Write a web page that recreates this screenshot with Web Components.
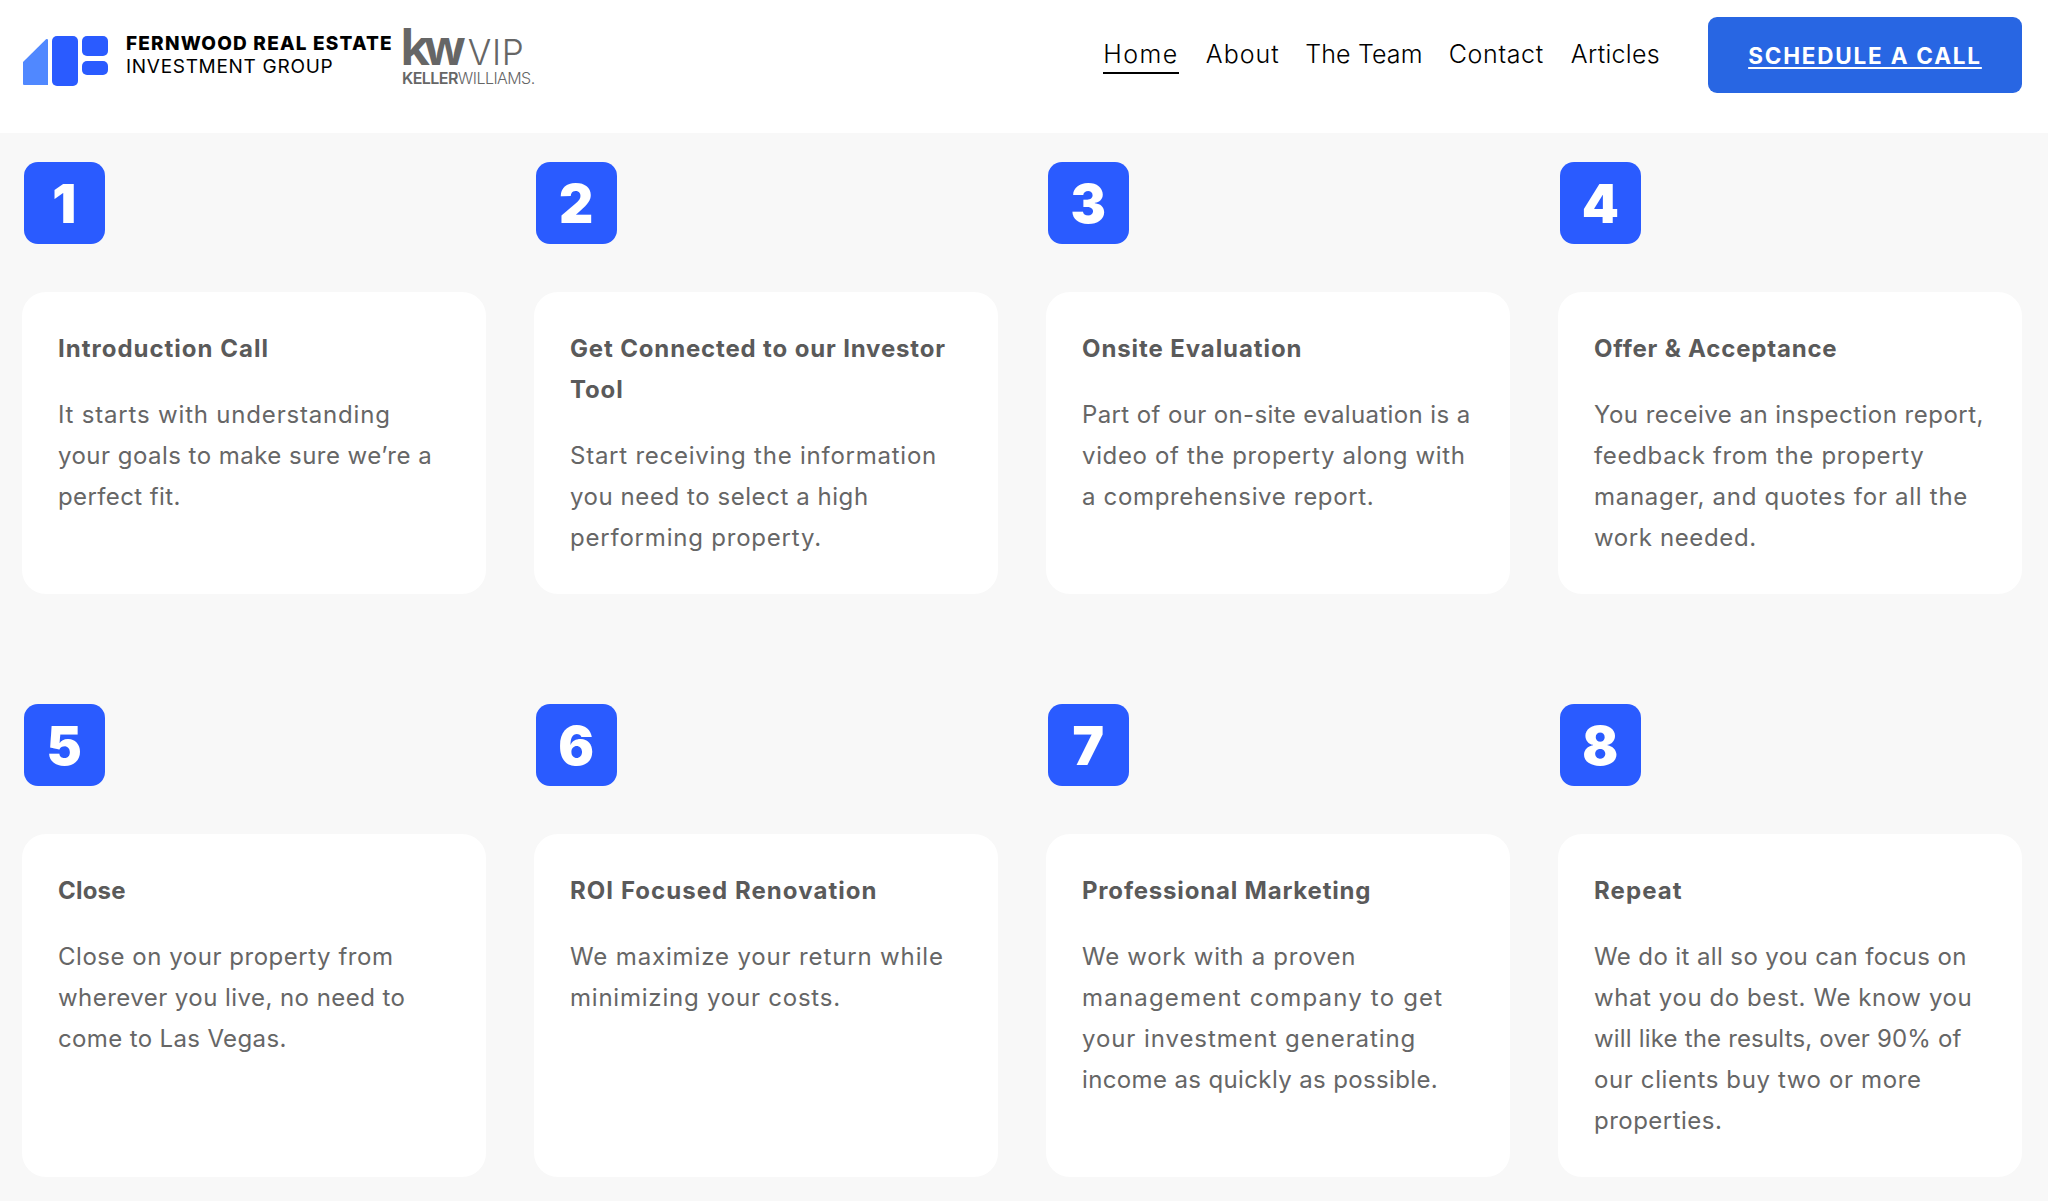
<!DOCTYPE html>
<html lang="en"><head><meta charset="utf-8"><title>Fernwood</title>
<style>
html,body{margin:0;background:#f8f8f8;font-family:Inter,"Open Sans",sans-serif}
step-item span{white-space:nowrap}
</style></head><body>
<site-header>
  <site-logo slot="logo"></site-logo>
  <nav-link active style="letter-spacing:1.45px">Home</nav-link>
  <nav-link style="letter-spacing:1px;margin-right:-1.5px">About</nav-link>
  <nav-link style="letter-spacing:.14px;margin-right:-1px">The Team</nav-link>
  <nav-link style="letter-spacing:.66px">Contact</nav-link>
  <nav-link style="letter-spacing:.31px">Articles</nav-link>
  <cta-button slot="cta">SCHEDULE A CALL</cta-button>
</site-header>
<step-grid>
  <step-item n="1" heading="Introduction Call" hls="1"><span style="letter-spacing:.81px">It starts with understanding</span><br><span style="letter-spacing:.47px">your goals to make sure we’re a</span><br><span style="letter-spacing:.39px">perfect fit.</span></step-item>
  <step-item n="2" heading="Get Connected to our Investor&#10;Tool" hls=".85"><span style="letter-spacing:.76px">Start receiving the information</span><br><span style="letter-spacing:.56px">you need to select a high</span><br><span style="letter-spacing:.79px">performing property.</span></step-item>
  <step-item n="3" heading="Onsite Evaluation" hls=".91"><span style="letter-spacing:.38px">Part of our on-site evaluation is a</span><br><span style="letter-spacing:.64px">video of the property along with</span><br><span style="letter-spacing:.66px">a comprehensive report.</span></step-item>
  <step-item n="4" heading="Offer &amp; Acceptance" hls=".81"><span style="letter-spacing:.48px">You receive an inspection report,</span><br><span style="letter-spacing:.67px">feedback from the property</span><br><span style="letter-spacing:.72px">manager, and quotes for all the</span><br><span style="letter-spacing:.61px">work needed.</span></step-item>
  <step-item n="5" heading="Close" hls=".2"><span style="letter-spacing:.53px">Close on your property from</span><br><span style="letter-spacing:.45px">wherever you live, no need to</span><br><span style="letter-spacing:.36px">come to Las Vegas.</span></step-item>
  <step-item n="6" heading="ROI Focused Renovation" hls="1.05"><span style="letter-spacing:.86px">We maximize your return while</span><br><span style="letter-spacing:.78px">minimizing your costs.</span></step-item>
  <step-item n="7" heading="Professional Marketing" hls=".81"><span style="letter-spacing:.72px">We work with a proven</span><br><span style="letter-spacing:1.19px">management company to get</span><br><span style="letter-spacing:.92px">your investment generating</span><br><span style="letter-spacing:.37px">income as quickly as possible.</span></step-item>
  <step-item n="8" heading="Repeat" hls="1.1"><span style="letter-spacing:.39px">We do it all so you can focus on</span><br><span style="letter-spacing:.58px">what you do best. We know you</span><br><span style="letter-spacing:.18px">will like the results, over 90% of</span><br><span style="letter-spacing:.62px">our clients buy two or more</span><br><span style="letter-spacing:.48px">properties.</span></step-item>
</step-grid>
<script>
function def(name, html, extra){
  const t=document.createElement('template');t.innerHTML=html;
  customElements.define(name,class extends HTMLElement{
    connectedCallback(){
      if(this.shadowRoot)return;
      const r=this.attachShadow({mode:'open'});r.appendChild(t.content.cloneNode(true));
      if(extra)extra(this,r);
    }
  });
}
def('site-header',`<style>
:host{display:flex;align-items:flex-start;height:133px;background:#fff;padding:0 26px 0 22px;box-sizing:border-box}
.nav{display:flex;margin:38px 48px 0 auto;gap:27px}
::slotted(cta-button){margin-top:17px}
</style><slot name="logo"></slot><div class="nav"><slot></slot></div><slot name="cta"></slot>`);
def('site-logo',`<style>
:host{display:flex;align-items:flex-start;box-sizing:border-box;padding-top:25px}
svg{display:block;margin-top:11px}
.name{margin:7px 0 0 17px;width:277px;font-size:19px;line-height:23px;color:#000;white-space:nowrap}
.name b{display:block;font-weight:800;letter-spacing:1.2px}
.name span{display:block;font-weight:400;letter-spacing:.7px}
.kw{color:#666;width:132px;margin-left:-1px;white-space:nowrap}
.top{display:flex;align-items:baseline;height:41px}
.k{font-size:48px;line-height:43px;letter-spacing:-5.5px;font-weight:700;font-family:"Open Sans",sans-serif;margin-left:-2px}
.v{font-size:35px;line-height:28px;font-weight:300;margin-left:8px;letter-spacing:.6px}
.w{font-size:16px;line-height:14px;margin-top:5px;letter-spacing:-.55px;font-weight:600}
.w i{font-style:normal;font-weight:300}
</style>
<svg width="87" height="50" viewBox="0 0 87 50"><path d="M26 4V49H2a1 1 0 0 1-1-1V26L24 3.2A1.2 1.2 0 0 1 26 4Z" fill="#5088ff"/><rect x="30" y="0" width="26" height="50" rx="5" fill="#2a5bff"/><rect x="60" y="0" width="26" height="20" rx="5" fill="#2a5bff"/><rect x="60" y="25" width="26" height="14" rx="5" fill="#2a5bff"/></svg>
<div class="name"><b>FERNWOOD REAL ESTATE</b><span>INVESTMENT GROUP</span></div>
<div class="kw"><div class="top"><span class="k">kw</span><span class="v">VIP</span></div><div class="w">KELLER<i>WILLIAMS.</i></div></div>`);
def('nav-link',`<style>
:host{display:block;font-size:25px;line-height:32px;font-weight:300;color:#000;height:34px;border-bottom:2px solid transparent;white-space:nowrap}
:host([active]){border-bottom-color:#000}
</style><slot></slot>`);
def('cta-button',`<style>
:host{display:flex;align-items:center;justify-content:center;width:314px;height:76px;background:#2866e3;border-radius:9px;color:#fff;font-size:22.5px;font-weight:700;letter-spacing:1.8px;text-decoration:underline;text-decoration-thickness:2px;text-underline-offset:3px;white-space:nowrap}
</style><slot></slot>`);
def('step-grid',`<style>
:host{display:grid;grid-template-columns:repeat(4,464px);column-gap:48px;row-gap:110px;padding:29px 0 23px 22px}
</style><slot></slot>`);
def('step-item',`<style>
:host{display:flex;flex-direction:column}
.n{width:81.5px;height:78.5px;padding-top:3px;margin:0 0 48.5px 1.5px;background:#2a5bff;border-radius:14px;display:flex;align-items:center;justify-content:center;color:#fff;font-size:53px;font-weight:900;line-height:1}
.card{flex:1;background:#fff;border-radius:24px;padding:36px 20px 36px 36px;color:#666;font-size:24px;line-height:41px;font-weight:400;white-space:nowrap}
h3{margin:0 0 25px;font:inherit;font-weight:700;color:#5a5a5a;white-space:pre-line}
</style><div class="n"></div><div class="card"><h3></h3><slot></slot></div>`,(h,r)=>{
  r.querySelector('.n').textContent=h.getAttribute('n');
  const t=r.querySelector('h3');t.textContent=h.getAttribute('heading');
  t.style.letterSpacing=h.getAttribute('hls')+'px';
});
</script>
</body></html>
